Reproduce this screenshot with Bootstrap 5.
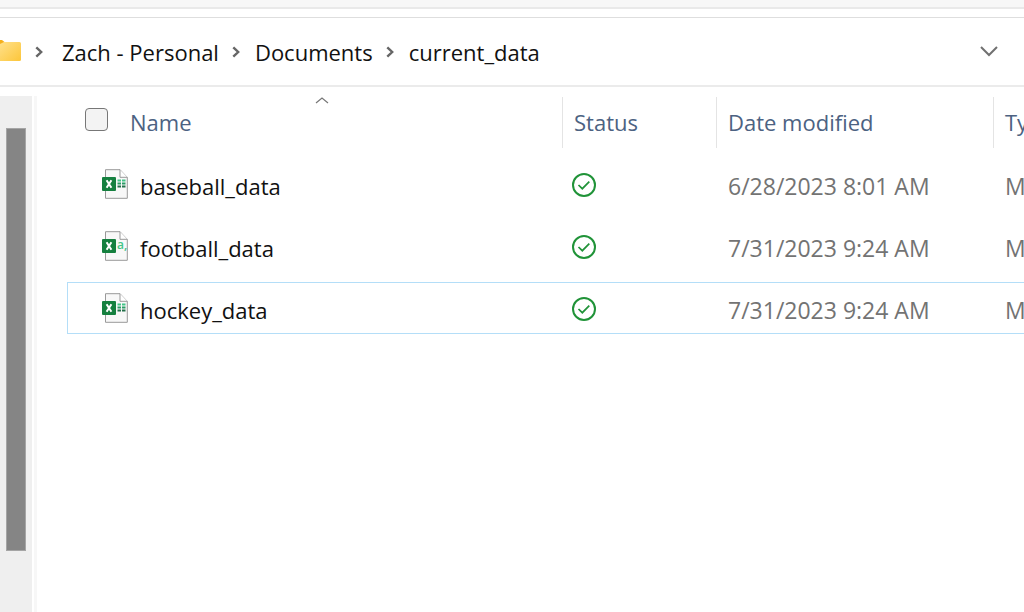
<!DOCTYPE html>
<html lang="en">
<head>
<meta charset="utf-8">
<meta name="viewport" content="width=device-width, initial-scale=1">
<title>current_data</title>
<link href="https://cdn.jsdelivr.net/npm/bootstrap@5.3.0/dist/css/bootstrap.min.css" rel="stylesheet">
<style>
body { font-family: "Open Sans", "Noto Sans", sans-serif; font-size: 22px; line-height: 32px; color: #111; }
svg { display: block; flex: none; }
.toolbar-edge { height: 9px; background: #f7f7f7; border-bottom: 2px solid #e9e9e9; }
.address { height: 70px; margin-top: 8px; border-top: 1px solid #dedede; border-bottom: 2px solid #ebebeb; }
.crumbs { margin-bottom: 0; flex-wrap: nowrap; gap: 15px; }
.crumbs a { color: #111; text-decoration: none; white-space: nowrap; }
.crumbs li { gap: 13px; }
.rail { width: 32px; margin-top: 9px; padding: 32px 6px 61px; background: #efefef; }
.thumb { background: #858585; border: 1px solid #a5a5a5; }
.divider { width: 3px; margin: 9px 0 0 2px; background: #f7f7f7; }
.listing { padding-left: 30px; }
.files { width: 100%; table-layout: fixed; border-collapse: separate; border-spacing: 0 10px; }
.files th, .files td { padding: 0 0 0 11px; white-space: nowrap; overflow: hidden; vertical-align: middle; }
.files th { height: 51px; padding-bottom: 2px; font-weight: 400; color: #4c6282; border-left: 1px solid #e4e4e4; }
.files th:first-child { border-left: 0; position: relative; padding-left: 18px; }
.files td { height: 52px; font-size: 23px; color: #737373; border: 1px solid transparent; border-width: 1px 0; padding: 3px 0 0 12px; }
.files td:first-child { font-size: 22px; color: #111; padding: 0 0 0 34px; border-left-width: 1px; }
.files .focused td { border-color: #b4def8; }
.files td:nth-child(2) { padding: 2px 0 0 10px; }
.col-status { width: 154px; }
.col-date { width: 277px; }
.col-type { width: 31px; }
.pick { appearance: none; width: 23px; height: 23px; margin: 0 22px 4px 0; border: 1px solid #777; border-radius: 4px; background: #f3f3f3; }
.sort { position: absolute; top: 0; left: 50%; }
.name-cell { gap: 12px; }
.name-cell span { padding-top: 4px; }
.chev { border: 0; background: none; padding: 0; margin: 0 26px 2px 0; }
</style>
</head>
<body class="bg-white vh-100 d-flex flex-column overflow-hidden">
<svg width="0" height="0" class="position-absolute" aria-hidden="true">
  <defs>
    <symbol id="page" viewBox="0 0 26 30">
      <path d="M3.500.7H18l7.300 7.600v21H3.500z" fill="#f8f8f8" stroke="#999" stroke-width="1"/>
      <path d="M18 .7v7.600h7.300" fill="#fff" stroke="#999" stroke-width="1"/>
      <rect y="8" width="14" height="14" rx="1" fill="#15803f"/>
      <path d="M4.600 11.200l4.800 7.600M9.400 11.200l-4.800 7.600" stroke="#fff" stroke-width="2"/>
    </symbol>
    <symbol id="sheet" viewBox="0 0 26 30">
      <use href="#page"/>
      <path d="M15.500 11.500h3.500M20 11.500h3.500" stroke="#43c487" stroke-width="2"/>
      <path d="M15.500 14.500h3.500M20 14.500h3.500" stroke="#2b9c66" stroke-width="2"/>
      <path d="M15.500 17.500h3.500M20 17.500h3.500" stroke="#23704a" stroke-width="2"/>
    </symbol>
    <symbol id="synced" viewBox="0 0 24 24">
      <circle cx="12" cy="12" r="11" fill="none" stroke="#209338" stroke-width="2"/>
      <path d="M6.500 12l3.800 3.700 7-7" fill="none" stroke="#209338" stroke-width="1.700"/>
    </symbol>
    <symbol id="next" viewBox="0 0 8 12">
      <path d="M1.300 1.300L6.200 6l-4.900 4.700" fill="none" stroke="#666" stroke-width="2.400"/>
    </symbol>
  </defs>
</svg>
<div class="toolbar-edge flex-shrink-0"></div>
<nav class="address d-flex align-items-center justify-content-between flex-shrink-0" aria-label="Path">
  <ol class="breadcrumb crumbs align-items-center">
    <li class="d-flex align-items-center">
      <svg width="22" height="24" viewBox="0 0 22 24"><defs><linearGradient id="gold" x2="1" y2="1"><stop stop-color="#ffe08a"/><stop offset="1" stop-color="#fcc63a"/></linearGradient></defs><path d="M0 0h2l2.500 2v3H0z" fill="#f5b01c"/><path d="M0 4l4-2h15.500q1.500 0 1.500 1.500V19.500q0 1.500-1.500 1.500H0z" fill="url(#gold)"/></svg>
      <svg width="8" height="12"><use href="#next"/></svg>
    </li>
    <li class="d-flex align-items-center ms-1"><a href="#">Zach - Personal</a><svg width="8" height="12"><use href="#next"/></svg></li>
    <li class="d-flex align-items-center"><a href="#">Documents</a><svg width="8" height="12"><use href="#next"/></svg></li>
    <li class="d-flex align-items-center"><a href="#" aria-current="page">current_data</a></li>
  </ol>
  <button class="chev" type="button" aria-label="Previous locations"><svg width="18" height="12" viewBox="0 0 18 12"><path d="M1 2l8 8 8-8" fill="none" stroke="#707070" stroke-width="2"/></svg></button>
</nav>
<div class="d-flex flex-grow-1">
  <div class="rail d-flex flex-shrink-0"><div class="thumb flex-fill"></div></div>
  <div class="divider flex-shrink-0"></div>
  <main class="listing flex-grow-1 overflow-hidden">
    <table class="files">
      <colgroup><col><col class="col-status"><col class="col-date"><col class="col-type"></colgroup>
      <thead>
        <tr>
          <th scope="col"><svg class="sort" width="14" height="8" viewBox="0 0 14 8"><path d="M1 6l6-5 6 5" fill="none" stroke="#777" stroke-width="1.200"/></svg><div class="d-flex align-items-center"><input class="pick" type="checkbox" id="all"><label for="all">Name</label></div></th>
          <th scope="col">Status</th><th scope="col">Date modified</th><th scope="col">Type</th>
        </tr>
      </thead>
      <tbody>
        <tr>
          <td><div class="name-cell d-flex align-items-center"><svg width="26" height="30"><use href="#sheet"/></svg><span>baseball_data</span></div></td>
          <td><svg width="24" height="24" role="img" aria-label="Synced"><use href="#synced"/></svg></td><td>6/28/2023 8:01 AM</td><td>Microsoft</td>
        </tr>
        <tr>
          <td><div class="name-cell d-flex align-items-center"><svg width="26" height="30"><use href="#page"/><text x="15" y="18" font-size="12" font-weight="600" fill="#43c487">a,</text></svg><span>football_data</span></div></td>
          <td><svg width="24" height="24" role="img" aria-label="Synced"><use href="#synced"/></svg></td><td>7/31/2023 9:24 AM</td><td>Microsoft</td>
        </tr>
        <tr class="focused">
          <td><div class="name-cell d-flex align-items-center"><svg width="26" height="30"><use href="#sheet"/></svg><span>hockey_data</span></div></td>
          <td><svg width="24" height="24" role="img" aria-label="Synced"><use href="#synced"/></svg></td><td>7/31/2023 9:24 AM</td><td>Microsoft</td>
        </tr>
      </tbody>
    </table>
  </main>
</div>
<script src="https://cdn.jsdelivr.net/npm/bootstrap@5.3.0/dist/js/bootstrap.bundle.min.js"></script>
</body>
</html>
